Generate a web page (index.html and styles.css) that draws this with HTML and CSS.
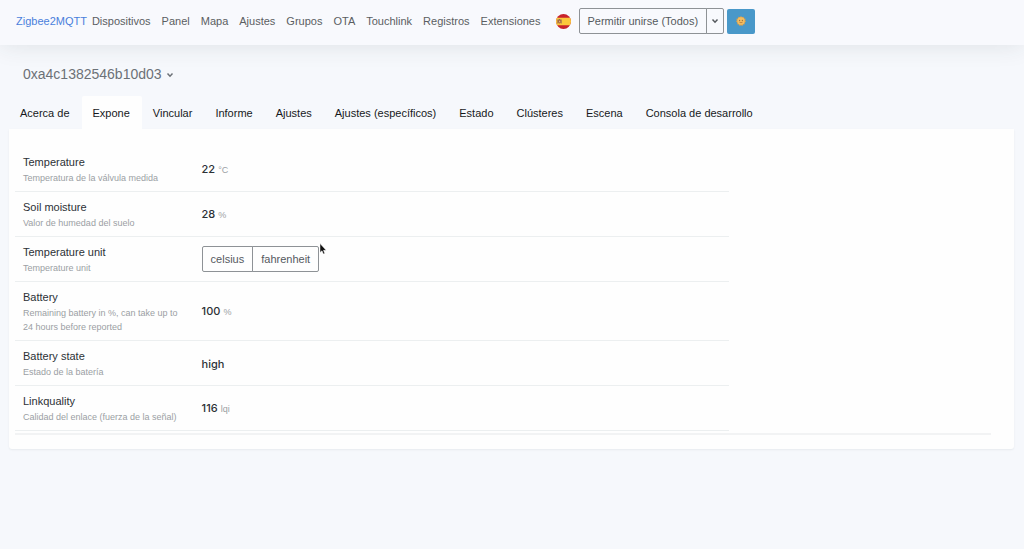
FILE: index.html
```html
<!DOCTYPE html>
<html lang="es">
<head>
<meta charset="utf-8">
<meta name="viewport" content="width=device-width, initial-scale=1">
<title>Zigbee2MQTT</title>
<link rel="stylesheet" href="styles.css">
</head>
<body>
<header class="navbar">
  <a class="brand" href="#">Zigbee2MQTT</a>
  <nav class="nav">
    <a href="#">Dispositivos</a>
    <a href="#">Panel</a>
    <a href="#">Mapa</a>
    <a href="#">Ajustes</a>
    <a href="#">Grupos</a>
    <a href="#">OTA</a>
    <a href="#">Touchlink</a>
    <a href="#">Registros</a>
    <a href="#">Extensiones</a>
  </nav>
  <button class="flag" type="button" aria-label="Español">
    <svg viewBox="0 0 30 30" width="15" height="15" aria-hidden="true">
      <clipPath id="disc"><circle cx="15" cy="15" r="15"/></clipPath>
      <g clip-path="url(#disc)">
        <path fill="#c8232c" d="M0 0h30v30H0z"/>
        <path fill="#fbc83c" d="M0 7.500h30v15H0z"/>
        <path fill="#b98a4a" d="M2 11h2v8H2zM10 11h2v8h-2z"/>
        <path fill="#a8683e" d="M4 12h6v4q0 3-3 3t-3-3z"/>
        <path fill="#d8b090" d="M6 13.500h2.500v3H6z"/>
        <path fill="#8c6a4c" d="M5 10h4v2H5z"/>
      </g>
    </svg>
  </button>
  <div class="group">
    <button class="btn" type="button">Permitir unirse (Todos)</button>
    <button class="btn btn-caret" type="button" aria-label="Elegir dispositivo">
      <svg viewBox="0 0 8 8" width="8" height="8" aria-hidden="true"><path d="M1.500 2.500 4 5.200l2.500-2.700"/></svg>
    </button>
  </div>
  <button class="theme" type="button" aria-label="Cambiar tema">
    <svg viewBox="0 0 22 22" width="10" height="10" aria-hidden="true">
      <path fill="#d9a04c" d="m11 0 2.500 3 3.500-1.500.8 3.800 3.700.7-1.500 3.500L22 12l-3 2.500.5 3.500-3.700.5L14 22l-3-1.800L8 22l-1.800-3.500-3.700-.5.5-3.500L0 12l2-2.500L.5 6l3.700-.7L5 1.500 8.500 3z"/>
      <circle cx="11" cy="11" r="8" fill="#f3bd62"/>
      <circle cx="8" cy="9.500" r="1.300" fill="#8a6334"/>
      <circle cx="14" cy="9.500" r="1.300" fill="#8a6334"/>
      <path d="M7.500 13.500q3.500 3 7 0" fill="none" stroke="#a8692c" stroke-width="1.500"/>
    </svg>
  </button>
</header>
<main class="content">
  <h1 class="device">
    <button class="device-toggle" type="button">0xa4c1382546b10d03
      <svg viewBox="0 0 8 8" width="8" height="8" aria-hidden="true"><path d="M1.500 2.500 4 5.200l2.500-2.700"/></svg>
    </button>
  </h1>
  <nav class="tabs">
    <a href="#">Acerca de</a>
    <a class="active" href="#" aria-current="page">Expone</a>
    <a href="#">Vincular</a>
    <a href="#">Informe</a>
    <a href="#">Ajustes</a>
    <a href="#">Ajustes (específicos)</a>
    <a href="#">Estado</a>
    <a href="#">Clústeres</a>
    <a href="#">Escena</a>
    <a href="#">Consola de desarrollo</a>
  </nav>
  <section class="card">
    <div class="features">
      <div class="row">
        <div><strong class="name">Temperature</strong><small class="hint">Temperatura de la válvula medida</small></div>
        <div class="value"><strong>22</strong> <small>°C</small></div>
      </div>
      <div class="row">
        <div><strong class="name">Soil moisture</strong><small class="hint">Valor de humedad del suelo</small></div>
        <div class="value"><strong>28</strong> <small>%</small></div>
      </div>
      <div class="row">
        <div><strong class="name">Temperature unit</strong><small class="hint">Temperature unit</small></div>
        <div class="units">
          <div class="group">
            <button class="btn" type="button">celsius</button>
            <button class="btn" type="button">fahrenheit</button>
          </div>
          <svg class="pointer" viewBox="0 0 8 12" width="8" height="12" aria-hidden="true"><path d="M1 .5v9l2-1.700 1.300 3.200 1.500-.6L4.500 7.300h2.700z"/></svg>
        </div>
      </div>
      <div class="row">
        <div><strong class="name">Battery</strong><small class="hint">Remaining battery in %, can take up to 24 hours before reported</small></div>
        <div class="value"><strong>100</strong> <small>%</small></div>
      </div>
      <div class="row">
        <div><strong class="name">Battery state</strong><small class="hint">Estado de la batería</small></div>
        <div class="value"><strong>high</strong></div>
      </div>
      <div class="row">
        <div><strong class="name">Linkquality</strong><small class="hint">Calidad del enlace (fuerza de la señal)</small></div>
        <div class="value"><strong>116</strong> <small>lqi</small></div>
      </div>
    </div>
    <hr class="rule">
  </section>
</main>
</body>
</html>
```
FILE: styles.css
```css
* {
  box-sizing: border-box;
}

body {
  margin: 0;
  min-height: 100vh;
  background: #f6f8fc;
  color: #2c3136;
  font: 11px/16px "Liberation Sans", Arial, sans-serif;
}

a {
  color: inherit;
  text-decoration: none;
}

button {
  margin: 0;
  padding: 0;
  border: 0;
  background: none;
  color: inherit;
  font: inherit;
}

svg {
  display: block;
}

.navbar {
  display: flex;
  align-items: center;
  padding: 8px 16px 11px;
  background: #f8f9fd;
  box-shadow: 0 0 24px rgba(41, 60, 60, 0.12);
  color: #5b5e62;
}

.brand {
  margin-right: 5px;
  color: #4a7fdc;
}

.nav {
  display: flex;
  gap: 11px;
}

.flag {
  margin: 0 8px 0 15px;
}

.group {
  display: flex;
}

.btn {
  padding: 4px 8px;
  border: 1px solid #8e9296;
  border-radius: 2px;
  color: #55595e;
}

.btn:not(:first-child) {
  margin-left: -1px;
  border-top-left-radius: 0;
  border-bottom-left-radius: 0;
}

.btn:not(:last-child) {
  border-top-right-radius: 0;
  border-bottom-right-radius: 0;
}

.btn-caret {
  padding: 4px;
}

.btn-caret path,
.device-toggle path {
  fill: none;
  stroke: currentColor;
  stroke-width: 1.5;
}

.theme {
  margin-left: 3px;
  padding: 7px 9px 8px;
  border-radius: 2px;
  background: #4998c9;
}

.content {
  padding: 19px 10px 0 9px;
}

.device {
  margin: 0 14px 11px;
  color: #6c7177;
  font-size: 14px;
  font-weight: 400;
  line-height: 21px;
}

.device-toggle {
  display: flex;
  align-items: center;
  gap: 4px;
}

.tabs {
  display: flex;
  color: #16181b;
}

.tabs a {
  padding: 9px 12px 8px 11px;
  border-radius: 2px 2px 0 0;
}

.tabs .active {
  background: #fefefe;
}

.card {
  padding: 18px 23px 14px 6px;
  border-radius: 0 0 3px 3px;
  background: #fefefe;
  box-shadow: 0 1px 2px rgba(60, 80, 80, 0.08);
}

.features {
  width: 73.2%;
}

.row {
  display: grid;
  grid-template-columns: 1fr 3fr;
  align-items: center;
  border-bottom: 1px solid #eceff0;
}

.row > div {
  padding: 7px 8px 6px;
}

.name,
.hint {
  display: block;
}

.name {
  font-weight: 400;
  line-height: 17px;
}

.value strong {
  font-family: Inter, "Liberation Sans", sans-serif;
  font-weight: 500;
}

.hint {
  color: #9b9fa4;
  font-size: 9px;
  line-height: 14px;
}

.value small {
  color: #9b9fa4;
  font-size: 9px;
}

.row > .units {
  display: flex;
  position: relative;
  padding-block: 0;
}

.pointer {
  position: absolute;
  left: 125px;
  top: -3px;
  fill: #111;
  stroke: #fff;
  stroke-width: 0.5;
}

.rule {
  margin: 2px 0 0;
  border: 0;
  border-top: 2px solid #f2f3f4;
}
```
